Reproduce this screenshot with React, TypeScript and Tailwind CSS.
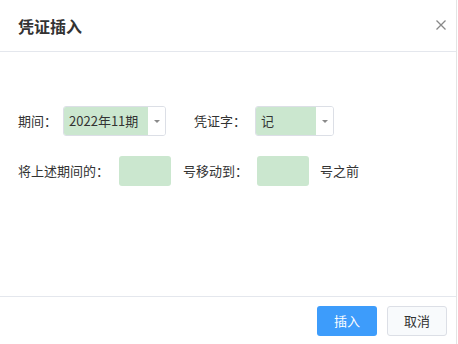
import React from 'react';

const font = { fontFamily: '"Microsoft YaHei", "Noto Sans CJK SC", "Noto Sans", sans-serif' };

const SelectBox: React.FC<{ value: string; width: string }> = ({ value, width }) => (
    <div className={`flex h-[30px] ${width} rounded-[3px] border border-[#dcdfe6] overflow-hidden`}>
        <div className="flex-1 flex items-center bg-[#cbe7cf] pl-[5px] text-[13px] text-[#333]">{value}</div>
        <div className="w-[17px] flex items-center justify-center bg-white">
            <div className="w-0 h-0 border-l-[3px] border-r-[3px] border-t-[3px] border-l-transparent border-r-transparent border-t-[#8a8a8a]" />
        </div>
    </div>
);

const NumInput: React.FC = () => (
    <div className="w-[52px] h-[30px] rounded-[3px] bg-[#cbe7cf]" />
);

export default function App() {
    return (
        <div className="w-[458px] h-[344px] bg-white" style={font}>
            <div className="w-[457px] h-full flex flex-col border-r border-[#e4e4e4]">
                <div className="h-[52px] flex items-center justify-between pl-[18px] pr-[9px] border-b border-[#e4e7ed]">
                    <span className="text-[16px] font-bold text-[#333] mt-[1px]">凭证插入</span>
                    <svg width="12" height="12" viewBox="0 0 12 12" className="text-[#888] -mt-[2px]">
                        <path d="M1.5 1.5 L10.5 10.5 M10.5 1.5 L1.5 10.5" stroke="currentColor" strokeWidth="1.3" fill="none" />
                    </svg>
                </div>

                <div className="flex-1 pt-[54px] pl-[18px] text-[13px] text-[#333]">
                    <div className="flex items-center h-[30px]">
                        <span>期间：</span>
                        <div className="ml-[6px]">
                            <SelectBox value="2022年11期" width="w-[103px]" />
                        </div>
                        <span className="ml-[28px]">凭证字：</span>
                        <div className="ml-[9px]">
                            <SelectBox value="记" width="w-[79px]" />
                        </div>
                    </div>
                    <div className="flex items-center h-[30px] mt-[20px]">
                        <span>将上述期间的：</span>
                        <div className="ml-[10px]"><NumInput /></div>
                        <span className="ml-[12px]">号移动到：</span>
                        <div className="ml-[9px]"><NumInput /></div>
                        <span className="ml-[11px]">号之前</span>
                    </div>
                </div>

                <div className="h-[48px] border-t border-[#e4e7ed] flex justify-end items-start pt-[9px] pr-[9px] gap-[10px]">
                    <button className="w-[60px] h-[30px] rounded-[3px] bg-[#3d9cfb] text-white text-[13px]">插入</button>
                    <button className="w-[60px] h-[30px] rounded-[3px] border border-[#dcdfe6] bg-[#f8fafc] text-[#333] text-[13px]">取消</button>
                </div>
            </div>
        </div>
    );
}
